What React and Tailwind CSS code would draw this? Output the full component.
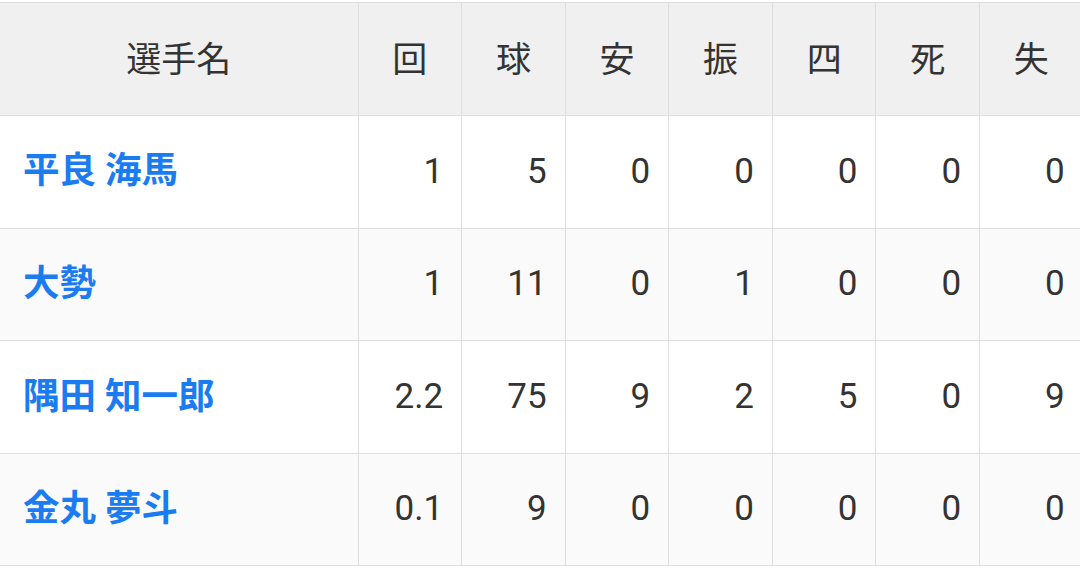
import React from "react";

const rows = [
  { name: "平良 海馬", v: ["1", "5", "0", "0", "0", "0", "0"] },
  { name: "大勢", v: ["1", "11", "0", "1", "0", "0", "0"] },
  { name: "隅田 知一郎", v: ["2.2", "75", "9", "2", "5", "0", "9"] },
  { name: "金丸 夢斗", v: ["0.1", "9", "0", "0", "0", "0", "0"] },
];

const heads = ["回", "球", "安", "振", "四", "死", "失"];

export default function App() {
  return (
    <div
      className="w-[1080px] h-[572px] overflow-hidden bg-white pt-[2px]"
      style={{ fontFamily: 'Roboto, "Noto Sans CJK JP", sans-serif' }}
    >
      <table className="table-fixed border-collapse w-[1083px] text-[35px] text-[#333333]">
        <colgroup>
          <col className="w-[358px]" />
          {heads.map((h) => (
            <col key={h} className="w-[103.6px]" />
          ))}
        </colgroup>
        <thead>
          <tr className="h-[113px] bg-[#f0f0f0]">
            <th className="border border-l-0 border-[#dedede] font-normal text-center pt-[5px]">選手名</th>
            {heads.map((h) => (
              <th key={h} className="border border-[#dedede] font-normal text-center pt-[5px]">
                {h}
              </th>
            ))}
          </tr>
        </thead>
        <tbody>
          {rows.map((r, i) => (
            <tr key={r.name} className={`h-[112.6px] ${i % 2 === 0 ? "bg-white" : "bg-[#fafafa]"}`}>
              <td className="border border-l-0 border-[#dedede] pl-[23px] font-bold text-[36.5px] text-[#1b7cf2] text-left">
                {r.name}
              </td>
              {r.v.map((x, j) => (
                <td key={j} className="border border-[#dedede] text-right pr-[18px]">
                  {x}
                </td>
              ))}
            </tr>
          ))}
        </tbody>
      </table>
    </div>
  );
}
